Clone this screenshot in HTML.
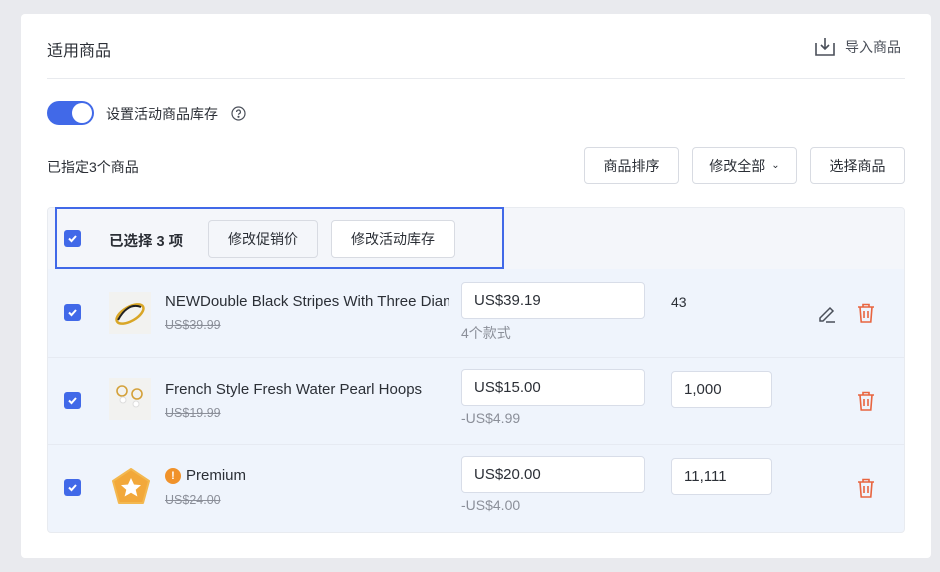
<!DOCTYPE html>
<html><head><meta charset="utf-8"><style>
*{box-sizing:border-box;margin:0;padding:0}
body{width:940px;height:572px;background:#e9eaee;font-family:"Liberation Sans","Noto Sans CJK SC",sans-serif;color:#2b2f36;position:relative;overflow:hidden}
.a{position:absolute}
.card{left:21px;top:14px;width:910px;height:544px;background:#fff;border-radius:4px}
.btn{position:absolute;background:#fff;border:1px solid #d8dbe2;border-radius:4px;font-size:14px;display:flex;align-items:center;justify-content:center;color:#2b2f36}
.cb{position:absolute;width:17px;height:17px;background:#4169e8;border-radius:3px}
.cb svg{position:absolute;left:3px;top:3px}
.inp{position:absolute;background:#fff;border:1px solid #d8dde8;border-radius:4px;font-size:15px;padding-left:12px;display:flex;align-items:center;color:#2b2f36}
.t{position:absolute;font-size:15px;white-space:nowrap}
.s{position:absolute;font-size:12.5px;color:#8b8f99;text-decoration:line-through}
.g{position:absolute;font-size:14px;color:#8b8f99}
</style></head><body>
<div class="a card"></div>
<div class="t" style="left:47px;top:37px;font-size:16px">适用商品</div>
<svg class="a" style="left:815px;top:37px" width="20" height="19" viewBox="0 0 20 19" fill="none" stroke="#4a4f59" stroke-width="1.6"><path d="M1 6v12h18V6M10 1v11M6 8l4 4 4-4"/></svg>
<div class="t" style="left:845px;top:37px;font-size:14px;color:#4a4f59">导入商品</div>
<div class="a" style="left:47px;top:78px;width:858px;height:1px;background:#e8eaee"></div>
<div class="a" style="left:47px;top:101px;width:47px;height:24px;border-radius:12px;background:#4169e8"></div>
<div class="a" style="left:72px;top:103px;width:20px;height:20px;border-radius:10px;background:#fff"></div>
<div class="t" style="left:106px;top:104px;font-size:14px">设置活动商品库存</div>
<svg class="a" style="left:231px;top:106px" width="15" height="15" viewBox="0 0 15 15" fill="none" stroke="#4a4f59" stroke-width="1.2"><circle cx="7.5" cy="7.5" r="6.5"/><path d="M5.6 6a1.9 1.9 0 1 1 2.6 1.7c-.5.2-.7.6-.7 1.1"/><circle cx="7.5" cy="10.8" r=".5" fill="#4a4f59"/></svg>
<div class="t" style="left:47px;top:157px;font-size:14px">已指定3个商品</div>
<div class="btn" style="left:584px;top:147px;width:95px;height:37px">商品排序</div>
<div class="btn" style="left:692px;top:147px;width:105px;height:37px">修改全部 <span style="font-size:10px;margin-left:6px">&#8964;</span></div>
<div class="btn" style="left:810px;top:147px;width:95px;height:37px">选择商品</div>
<div class="a" style="left:47px;top:207px;width:858px;height:326px;border:1px solid #e8ebf0;border-radius:4px;background:#eff4fc;overflow:hidden">
 <div class="a" style="left:0;top:0;width:858px;height:61px;background:#f4f6fa"></div>
 <div class="a" style="left:0;top:149px;width:858px;height:1px;background:#e6eaf2"></div>
 <div class="a" style="left:0;top:236px;width:858px;height:1px;background:#e6eaf2"></div>
</div>
<div class="a" style="left:55px;top:207px;width:449px;height:62px;border:2px solid #4169e8"></div>
<div class="cb" style="left:64px;top:230px"><svg width="11" height="11" viewBox="0 0 11 11" fill="none" stroke="#fff" stroke-width="2"><path d="M2 5.5l2.5 2.5L9 3"/></svg></div>
<div class="t" style="left:109px;top:230px;font-size:14.5px;font-weight:bold">已选择 3 项</div>
<div class="btn" style="left:208px;top:220px;width:110px;height:38px;background:#f4f6fa">修改促销价</div>
<div class="btn" style="left:331px;top:220px;width:124px;height:38px">修改活动库存</div>

<div class="cb" style="left:64px;top:304px"><svg width="11" height="11" viewBox="0 0 11 11" fill="none" stroke="#fff" stroke-width="2"><path d="M2 5.5l2.5 2.5L9 3"/></svg></div>
<div class="a" style="left:109px;top:292px;width:42px;height:42px;background:#f2f2f0"></div>
<svg class="a" style="left:110px;top:296px" width="40" height="36"><ellipse cx="20" cy="18" rx="15" ry="7" transform="rotate(-30 20 18)" fill="none" stroke="#d9a626" stroke-width="2.5"/><path d="M8 24 Q18 6 31 11" stroke="#222" stroke-width="2" fill="none"/></svg>
<div class="t" style="left:165px;top:293px;width:284px;overflow:hidden">NEWDouble Black Stripes With Three Diamonds</div>
<div class="s" style="left:165px;top:318px">US$39.99</div>
<div class="inp" style="left:461px;top:282px;width:184px;height:37px">US$39.19</div>
<div class="g" style="left:461px;top:323px">4个款式</div>
<div class="t" style="left:671px;top:294px;font-size:14px">43</div>
<svg class="a" style="left:817px;top:304px" width="20" height="19" fill="none" stroke="#4a4f59" stroke-width="1.5"><path d="M3 14l10-10 3 3-10 10H3z M9 18h9"/></svg>
<svg class="a" style="left:857px;top:303px" width="18" height="20" fill="none" stroke="#e8643f" stroke-width="1.6"><path d="M1 4h16M6 4V1.5h6V4M3 4l1.2 15h9.6L15 4M7 8v7M11 8v7"/></svg>

<div class="cb" style="left:64px;top:392px"><svg width="11" height="11" viewBox="0 0 11 11" fill="none" stroke="#fff" stroke-width="2"><path d="M2 5.5l2.5 2.5L9 3"/></svg></div>
<div class="a" style="left:109px;top:378px;width:42px;height:42px;background:#f2f2f0"></div>
<svg class="a" style="left:110px;top:380px" width="40" height="36"><circle cx="12" cy="11" r="5" fill="none" stroke="#d4a13a" stroke-width="1.6"/><circle cx="27" cy="14" r="5" fill="none" stroke="#d4a13a" stroke-width="1.6"/><circle cx="13" cy="20" r="3" fill="#fff" stroke="#ddd"/><circle cx="26" cy="24" r="3" fill="#fff" stroke="#ddd"/></svg>
<div class="t" style="left:165px;top:381px">French Style Fresh Water Pearl Hoops</div>
<div class="s" style="left:165px;top:406px">US$19.99</div>
<div class="inp" style="left:461px;top:369px;width:184px;height:37px">US$15.00</div>
<div class="g" style="left:461px;top:410px">-US$4.99</div>
<div class="inp" style="left:671px;top:371px;width:101px;height:37px">1,000</div>
<svg class="a" style="left:857px;top:391px" width="18" height="20" fill="none" stroke="#e8643f" stroke-width="1.6"><path d="M1 4h16M6 4V1.5h6V4M3 4l1.2 15h9.6L15 4M7 8v7M11 8v7"/></svg>

<div class="cb" style="left:64px;top:479px"><svg width="11" height="11" viewBox="0 0 11 11" fill="none" stroke="#fff" stroke-width="2"><path d="M2 5.5l2.5 2.5L9 3"/></svg></div>
<svg class="a" style="left:110px;top:467px" width="42" height="40"><path d="M21 2L39 14 33 36H9L3 14z" fill="#f2a83a" stroke="#f3b850" stroke-width="2" stroke-linejoin="round"/><path d="M21 11l3 6.5 7 .6-5.3 4.6 1.7 6.8-6.4-3.7-6.4 3.7 1.7-6.8-5.3-4.6 7-.6z" fill="#fff"/></svg>
<div class="a" style="left:165px;top:468px;width:16px;height:16px;border-radius:8px;background:#f0922b;color:#fff;font-size:11px;text-align:center;line-height:16px;font-weight:bold">!</div>
<div class="t" style="left:186px;top:467px">Premium</div>
<div class="s" style="left:165px;top:493px">US$24.00</div>
<div class="inp" style="left:461px;top:456px;width:184px;height:37px">US$20.00</div>
<div class="g" style="left:461px;top:497px">-US$4.00</div>
<div class="inp" style="left:671px;top:458px;width:101px;height:37px">11,111</div>
<svg class="a" style="left:857px;top:478px" width="18" height="20" fill="none" stroke="#e8643f" stroke-width="1.6"><path d="M1 4h16M6 4V1.5h6V4M3 4l1.2 15h9.6L15 4M7 8v7M11 8v7"/></svg>
</body></html>
